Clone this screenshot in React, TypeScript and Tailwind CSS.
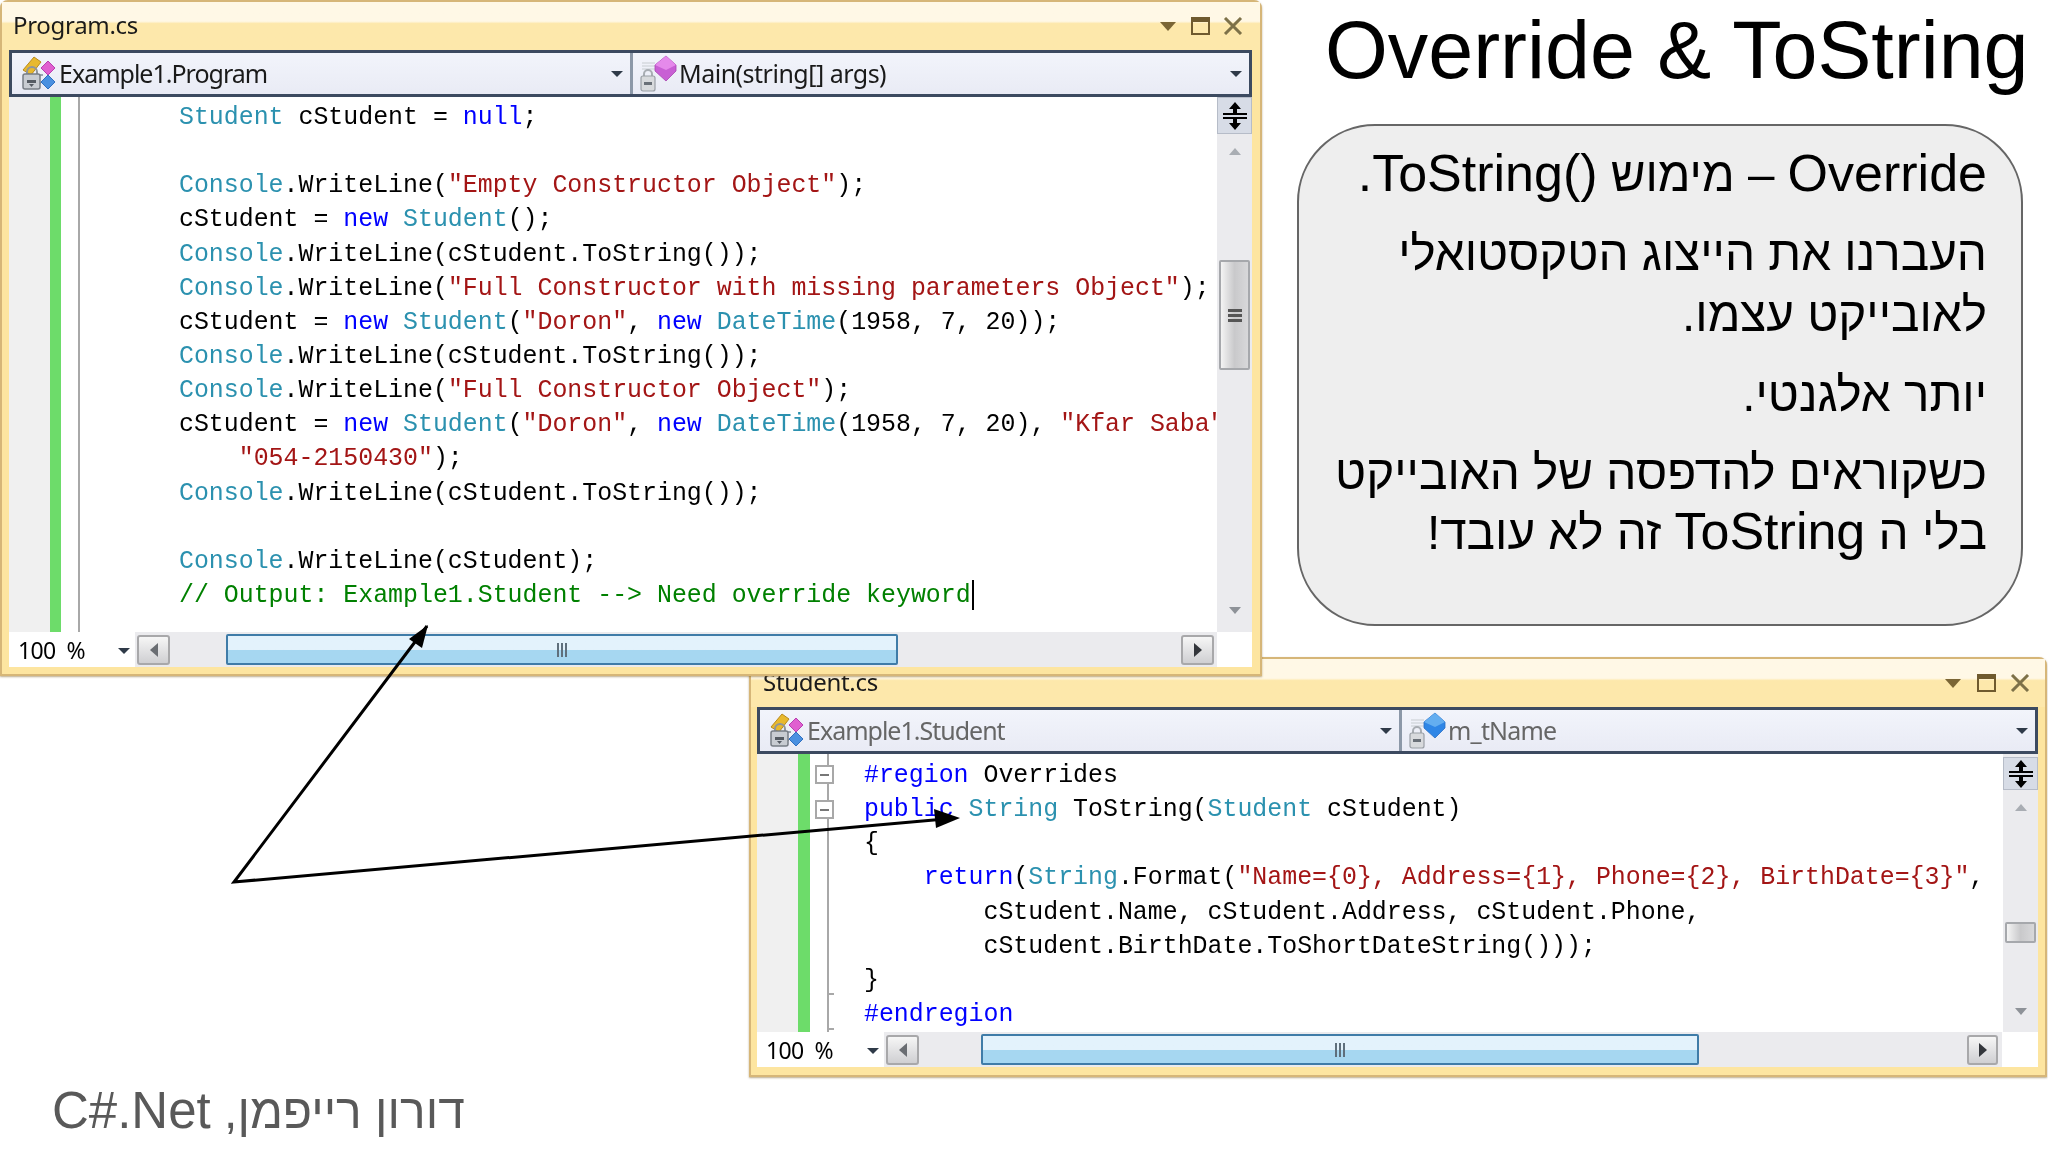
import React from "react";

type Tok = [string, string];
const T = "text-[#2b91af]";
const K = "text-[#0000ff]";
const S = "text-[#a31515]";
const C = "text-[#008000]";
const P = "text-black";

const code1: Tok[][] = [
  [[T, "Student"], [P, " cStudent = "], [K, "null"], [P, ";"]],
  [],
  [[T, "Console"], [P, ".WriteLine("], [S, '"Empty Constructor Object"'], [P, ");"]],
  [[P, "cStudent = "], [K, "new"], [P, " "], [T, "Student"], [P, "();"]],
  [[T, "Console"], [P, ".WriteLine(cStudent.ToString());"]],
  [[T, "Console"], [P, ".WriteLine("], [S, '"Full Constructor with missing parameters Object"'], [P, ");"]],
  [[P, "cStudent = "], [K, "new"], [P, " "], [T, "Student"], [P, "("], [S, '"Doron"'], [P, ", "], [K, "new"], [P, " "], [T, "DateTime"], [P, "(1958, 7, 20));"]],
  [[T, "Console"], [P, ".WriteLine(cStudent.ToString());"]],
  [[T, "Console"], [P, ".WriteLine("], [S, '"Full Constructor Object"'], [P, ");"]],
  [[P, "cStudent = "], [K, "new"], [P, " "], [T, "Student"], [P, "("], [S, '"Doron"'], [P, ", "], [K, "new"], [P, " "], [T, "DateTime"], [P, "(1958, 7, 20), "], [S, '"Kfar Saba",']],
  [[P, "    "], [S, '"054-2150430"'], [P, ");"]],
  [[T, "Console"], [P, ".WriteLine(cStudent.ToString());"]],
  [],
  [[T, "Console"], [P, ".WriteLine(cStudent);"]],
  [[C, "// Output: Example1.Student --> Need override keyword"]],
];

const code2: Tok[][] = [
  [[K, "#region"], [P, " Overrides"]],
  [[K, "public"], [P, " "], [T, "String"], [P, " ToString("], [T, "Student"], [P, " cStudent)"]],
  [[P, "{"]],
  [[P, "    "], [K, "return"], [P, "("], [T, "String"], [P, ".Format("], [S, '"Name={0}, Address={1}, Phone={2}, BirthDate={3}"'], [P, ","]],
  [[P, "        cStudent.Name, cStudent.Address, cStudent.Phone,"]],
  [[P, "        cStudent.BirthDate.ToShortDateString()));"]],
  [[P, "}"]],
  [[K, "#endregion"]],
];

function ClassIcon() {
  return (
    <svg width="38" height="38" viewBox="0 0 38 38" className="shrink-0">
      <path d="M3 15 L14 2 L21 7 L11 20 Z" fill="#e8b92e" stroke="#b98a1c" strokeWidth="1" />
      <path d="M28 6 L35 13 L28 20 L21 13 Z" fill="#e05fd0" stroke="#b83fb0" strokeWidth="1" />
      <path d="M28 20 L35 27 L28 34 L21 27 Z" fill="#4a90e0" stroke="#2f6fc0" strokeWidth="1" />
      <path d="M17 20 H23 M17 28 H21" stroke="#9aa4b2" strokeWidth="2" />
      <path d="M7 20 V17 A5 5 0 0 1 17 17 V20" fill="none" stroke="#8f959c" strokeWidth="2" />
      <rect x="3" y="19" width="17" height="15" rx="2" fill="#c8ccd2" stroke="#777d85" strokeWidth="1.5" />
      <rect x="7" y="25" width="9" height="3" fill="#555b63" />
      <path d="M9 29 H14 L11.5 32 Z" fill="#555b63" />
    </svg>
  );
}

function MemberIcon({ color, edge, light }: { color: string; edge: string; light: string }) {
  return (
    <svg width="38" height="38" viewBox="0 0 38 38" className="shrink-0">
      <path d="M2 8 H15 M2 11 H15 M2 14 H15" stroke="#d5d9de" strokeWidth="1.3" />
      <path d="M26 1 L36 10 L36 16 L26 26 L15 16 L15 10 Z" fill={color} stroke={edge} strokeWidth="0.8" />
      <path d="M26 1 L36 10 L26 15 L15 10 Z" fill={light} />
      <path d="M4 21 V19 A4 4 0 0 1 12 19 V21" fill="none" stroke="#a8adb3" strokeWidth="2" />
      <rect x="1" y="21" width="14" height="15" rx="2" fill="#d8dadd" stroke="#9a9fa6" strokeWidth="1.2" />
      <rect x="4" y="27" width="8" height="3" fill="#6a7078" />
    </svg>
  );
}

function DropArrow() {
  return (
    <svg width="14" height="8" viewBox="0 0 14 8" className="shrink-0">
      <path d="M1 1 H13 L7 7 Z" fill="#2f3a48" />
    </svg>
  );
}

function WindowButtons({ gapA, gapB }: { gapA: string; gapB: string }) {
  return (
    <div className="flex items-center">
      <svg width="16" height="9" viewBox="0 0 16 9">
        <path d="M0 0 H16 L8 9 Z" fill="#7a6535" />
      </svg>
      <div className={"h-[18px] w-[19px] border-2 border-t-[5px] border-[#6f5a2e] " + gapA} />
      <svg width="20" height="18" viewBox="0 0 20 18" className={gapB}>
        <path d="M2 1 L18 17 M18 1 L2 17" stroke="#7d7148" strokeWidth="3" />
      </svg>
    </div>
  );
}

function Splitter({ cls }: { cls: string }) {
  return (
    <div className={"flex w-[35px] shrink-0 items-center justify-center border border-[#b6bcc8] bg-[#d7dce6] " + cls}>
      <svg width="26" height="30" viewBox="0 0 26 30">
        <path d="M13 1 L19 8 H15 V12 H11 V8 H7 Z" fill="#000" />
        <path d="M13 29 L19 22 H15 V18 H11 V22 H7 Z" fill="#000" />
        <path d="M1 13 H25 M1 17 H25" stroke="#000" strokeWidth="2" />
      </svg>
    </div>
  );
}

function VScroll({ splitCls, upCls, thumbCls, downCls, grip }: { splitCls: string; upCls: string; thumbCls: string; downCls: string; grip: boolean }) {
  return (
    <div className="flex w-[35px] shrink-0 flex-col bg-[#ebebee]">
      <Splitter cls={splitCls} />
      <div className={"flex shrink-0 items-center justify-center " + upCls}>
        <svg width="12" height="8" viewBox="0 0 12 8">
          <path d="M6 0 L12 7 H0 Z" fill="#a9adb3" />
        </svg>
      </div>
      <div className={"mx-[2px] flex shrink-0 items-center justify-center rounded-[2px] border-2 border-[#a6a8ac] bg-gradient-to-r from-[#f4f4f4] via-[#c9c9cb] to-[#d8d8da] " + thumbCls}>
        {grip && (
          <div className="flex flex-col gap-[2px]">
            <div className="h-[3px] w-[14px] bg-[#555]" />
            <div className="h-[3px] w-[14px] bg-[#555]" />
            <div className="h-[3px] w-[14px] bg-[#555]" />
          </div>
        )}
      </div>
      <div className="flex-1" />
      <div className={"flex shrink-0 items-center justify-center " + downCls}>
        <svg width="12" height="8" viewBox="0 0 12 8">
          <path d="M0 0 H12 L6 7 Z" fill="#8e9298" />
        </svg>
      </div>
    </div>
  );
}

function ArrowBtn({ dir, cls }: { dir: "l" | "r"; cls: string }) {
  return (
    <div className={"flex h-[30px] shrink-0 items-center justify-center rounded-[3px] border-2 border-[#a8a8aa] bg-gradient-to-b from-[#f6f6f6] to-[#cfcfd2] " + cls}>
      <svg width="10" height="14" viewBox="0 0 10 14">
        {dir === "l" ? <path d="M9 0 V14 L1 7 Z" fill="#6a6d72" /> : <path d="M1 0 V14 L9 7 Z" fill="#33363b" />}
      </svg>
    </div>
  );
}

function HBar({ zoomCls, thumbCls, rightCls, cornerCls }: { zoomCls: string; thumbCls: string; rightCls: string; cornerCls: string }) {
  return (
    <div className="flex h-[35px] shrink-0 items-center bg-[#ebebee]">
      <div className={"flex h-full shrink-0 items-center justify-between bg-white pl-[9px] pr-[4px] pt-[2px] " + zoomCls}>
        <span className="whitespace-pre font-['Noto_Sans'] text-[23px] leading-none tracking-[-0.6px] text-black">100  %</span>
        <DropArrow />
      </div>
      <ArrowBtn dir="l" cls="ml-[2px] w-[33px]" />
      <div className={"flex h-[31px] shrink-0 items-center justify-center rounded-[2px] border-2 border-[#3f7ca8] bg-gradient-to-b from-[#e3f2fc] from-50% to-[#a6d7f1] to-50% " + thumbCls}>
        <div className="flex gap-[2px]">
          <div className="h-[14px] w-[2px] bg-[#5f6f7c]" />
          <div className="h-[14px] w-[2px] bg-[#5f6f7c]" />
          <div className="h-[14px] w-[2px] bg-[#5f6f7c]" />
        </div>
      </div>
      <div className="flex-1" />
      <ArrowBtn dir="r" cls={rightCls} />
      <div className={"h-full shrink-0 bg-white " + cornerCls} />
    </div>
  );
}

function Code({ lines, cls }: { lines: Tok[][]; cls: string }) {
  return (
    <div className={"min-w-0 flex-1 overflow-hidden whitespace-pre bg-white font-['Liberation_Mono'] text-[24.9px] leading-[34.15px] " + cls}>
      {lines.map((l, i) => (
        <div key={i} className="h-[34.15px]">
          {l.map((t, j) => (
            <span key={j} className={t[0]}>
              {t[1]}
            </span>
          ))}
          {i === 14 && <span className="ml-[1px] mt-[2px] inline-block h-[30px] w-[2px] bg-black align-top" />}
        </div>
      ))}
    </div>
  );
}

function ComboCell({ cls, textCls, label, icon }: { cls: string; textCls: string; label: string; icon: React.ReactNode }) {
  return (
    <div className={"flex h-full items-center pr-[6px] " + cls}>
      {icon}
      <span className={"font-['Noto_Sans'] text-[25px] leading-none " + textCls}>{label}</span>
      <div className="flex-1" />
      <DropArrow />
    </div>
  );
}

const frame =
  "flex flex-col rounded-t-[8px] border-2 border-[#d6b678] bg-[#fde5a0] shadow-[0_1px_2px_rgba(120,90,30,0.5)]";
const titleBar =
  "flex h-[48px] shrink-0 items-center justify-between bg-gradient-to-b from-[#fff8e6] from-40% to-[#fde8ab] to-45%";
const combo =
  "flex h-[47px] shrink-0 border-[3px] border-[#3c4a60] bg-gradient-to-b from-[#f2f4fb] to-[#e9ebf5]";

export default function App() {
  return (
    <div className="relative flex h-[1152px] w-[2048px] flex-col overflow-hidden bg-white font-['Liberation_Sans',sans-serif] blur-[0.5px]">
      <div className="flex h-[657px] shrink-0 items-start">
        {/* Program.cs */}
        <div className={"relative z-10 h-[676px] w-[1262px] shrink-0 pb-[6px] pl-[7px] pr-[8px] " + frame}>
          <div className={"-ml-[7px] -mr-[8px] pl-[11px] pr-[17px] " + titleBar}>
            <span className="-mt-[2px] font-['Noto_Sans'] text-[24px] tracking-[-0.3px] text-[#1b1b1b]">Program.cs</span>
            <WindowButtons gapA="ml-[15px]" gapB="ml-[13px]" />
          </div>
          <div className={combo}>
            <ComboCell cls="w-[621px] border-r-[3px] border-[#8c98a8] pl-[8px]" textCls="ml-[1px] tracking-[-1px] text-[#1a1a1a]" label="Example1.Program" icon={<ClassIcon />} />
            <ComboCell cls="flex-1 pl-[7px]" textCls="ml-[1px] tracking-[-0.5px] text-[#1a1a1a]" label="Main(string[] args)" icon={<MemberIcon color="#c85fd4" edge="#a845b0" light="#e58aeb" />} />
          </div>
          <div className="flex h-[535px] shrink-0">
            <div className="w-[41px] shrink-0 bg-[#f0f0f0]" />
            <div className="w-[11px] shrink-0 bg-[#6ddc6a]" />
            <div className="w-[19px] shrink-0 border-r-2 border-[#a8a8a8] bg-white" />
            <Code lines={code1} cls="pl-[99px] pt-[3px]" />
            <VScroll splitCls="h-[37px]" upCls="h-[36px]" thumbCls="mt-[90px] h-[110px]" downCls="h-[42px]" grip />
          </div>
          <HBar zoomCls="w-[126px]" thumbCls="ml-[56px] w-[672px]" rightCls="w-[33px]" cornerCls="ml-[3px] w-[35px]" />
        </div>

        {/* Title + note */}
        <div className="flex min-w-0 flex-1 flex-col">
          <h1 className="ml-[63px] mt-[4px] whitespace-nowrap text-[80.8px] font-normal leading-[92px] text-black">Override &amp; ToString</h1>
          <div dir="rtl" className="ml-[35px] mt-[28px] flex h-[502px] w-[726px] flex-col rounded-[78px] border-2 border-[#666] bg-[#eeeeee] pr-[34px] pt-[17px] text-[47.6px] leading-[61px] text-black">
            <p>
              <span className="text-[52px]">Override</span> – מימוש <bdi className="text-[52px]">ToString()</bdi>
              <span className="text-[52px]">.</span>
            </p>
            <p className="mt-[18px]">העברנו את הייצוג הטקסטואלי</p>
            <p>לאובייקט עצמו.</p>
            <p className="mt-[19px]">יותר אלגנטי.</p>
            <p className="mt-[17px]">כשקוראים להדפסה של האובייקט</p>
            <p className="-mt-[2px]">
              בלי ה <bdi className="text-[52px]">ToString</bdi> זה לא עובד!
            </p>
          </div>
        </div>
      </div>

      {/* Student.cs */}
      <div className="ml-[749px] shrink-0">
        <div className={"h-[420px] w-[1298px] pb-[8px] pl-[6px] pr-[7px] " + frame}>
          <div className={"-ml-[6px] -mr-[7px] pl-[12px] pr-[15px] " + titleBar}>
            <span className="-mt-[2px] font-['Noto_Sans'] text-[24px] tracking-[-0.3px] text-[#1b1b1b]">Student.cs</span>
            <WindowButtons gapA="ml-[16px]" gapB="ml-[14px]" />
          </div>
          <div className={combo}>
            <ComboCell cls="w-[642px] border-r-[3px] border-[#8c98a8] pl-[8px]" textCls="ml-[1px] tracking-[-1px] text-[#666]" label="Example1.Student" icon={<ClassIcon />} />
            <ComboCell cls="flex-1 pl-[7px]" textCls="ml-[1px] tracking-[-0.8px] text-[#666]" label="m_tName" icon={<MemberIcon color="#2f86e6" edge="#2a6fc4" light="#64aef0" />} />
          </div>
          <div className="flex h-[278px] shrink-0">
            <div className="w-[41px] shrink-0 bg-[#f0f0f0]" />
            <div className="w-[12px] shrink-0 bg-[#6ddc6a]" />
            <div className="relative w-[19px] shrink-0 border-r-2 border-[#a8a8a8] bg-white">
              <div className="absolute left-[5px] top-[11px] flex h-[19px] w-[19px] items-center justify-center border-2 border-[#a8a8a8] bg-white">
                <div className="h-[2px] w-[9px] bg-[#777]" />
              </div>
              <div className="absolute left-[5px] top-[46px] flex h-[19px] w-[19px] items-center justify-center border-2 border-[#a8a8a8] bg-white">
                <div className="h-[2px] w-[9px] bg-[#777]" />
              </div>
              <div className="absolute left-[17px] top-[239px] h-[2px] w-[7px] bg-[#a8a8a8]" />
              <div className="absolute left-[17px] top-[274px] h-[2px] w-[7px] bg-[#a8a8a8]" />
            </div>
            <Code lines={code2} cls="pl-[35px] pt-[4px]" />
            <VScroll splitCls="mt-[3px] h-[33px]" upCls="h-[36px]" thumbCls="mt-[96px] h-[21px]" downCls="h-[40px]" grip={false} />
          </div>
          <HBar zoomCls="w-[127px]" thumbCls="ml-[62px] w-[718px]" rightCls="w-[31px]" cornerCls="ml-[4px] w-[36px]" />
        </div>
      </div>

      {/* Footer */}
      <div dir="rtl" className="mt-[5px] w-fit pl-[52px] text-[48px] leading-[58px] text-[#595959]">
        דורון רייפמן, <bdi className="text-[51px]">C#.Net</bdi>
      </div>

      {/* Arrows over the windows */}
      <svg className="pointer-events-none absolute left-0 top-0 z-20" width="2048" height="1152" viewBox="0 0 2048 1152">
        <path d="M427 626 L234 882 L945 819" fill="none" stroke="#000" strokeWidth="3" />
        <path d="M428 625 L422 648 L409 639 Z" fill="#000" />
        <path d="M960 818 L936 828 L934 809 Z" fill="#000" />
      </svg>
    </div>
  );
}
